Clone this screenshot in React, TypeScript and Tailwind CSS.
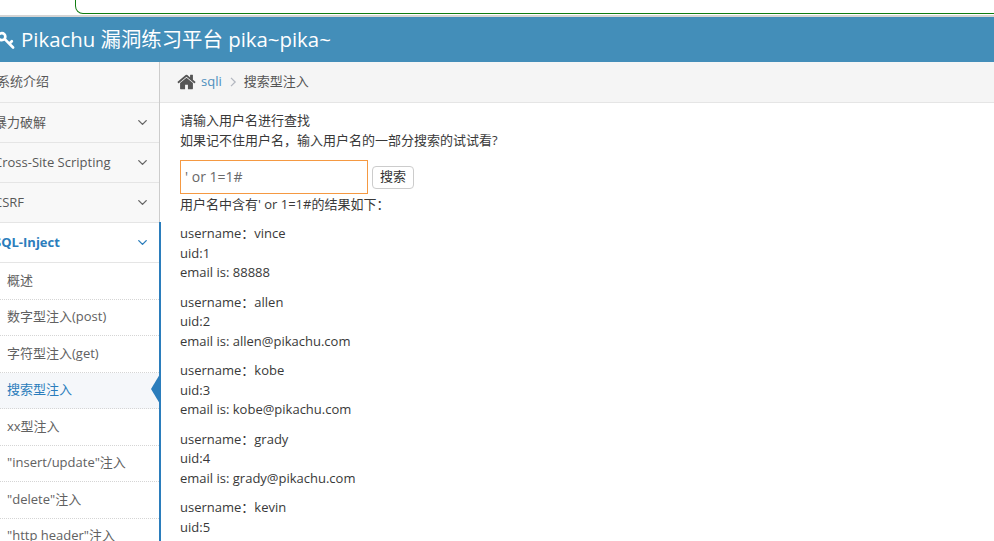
import { ChevronDown } from 'lucide-react';

const MENU = ['暴力破解', 'Cross-Site Scripting', 'CSRF'];
const SUB_MENU = ['数字型注入(post)', '字符型注入(get)'];
const SUB_MENU_AFTER = ['xx型注入', '"insert/update"注入', '"delete"注入', '"http header"注入'];

const RESULTS = [
  { name: 'vince', uid: 1, email: '88888' },
  { name: 'allen', uid: 2, email: 'allen@pikachu.com' },
  { name: 'kobe', uid: 3, email: 'kobe@pikachu.com' },
  { name: 'grady', uid: 4, email: 'grady@pikachu.com' },
  { name: 'kevin', uid: 5, email: 'kevin@pikachu.com' },
];

function SubItem({ label }: { label: string }) {
  return (
    <li className="h-[36.5px] pl-[7px] pb-[1px] flex items-center bg-white text-[#616161] border-b border-dotted border-[#d5d5d5] whitespace-nowrap">
      {label}
    </li>
  );
}

export default function App() {
  return (
    <div className="h-[541px] w-[994px] overflow-hidden bg-white text-[13px] leading-[19.5px] text-[#393939] font-['Open_Sans','Noto_Sans_CJK_SC',sans-serif]">
      {/* browser strip above the page */}
      <div className="h-[17px] border-b-2 border-[#d4d4d4] overflow-hidden">
        <div className="ml-[75px] mr-[-20px] h-[14px] rounded-b-lg border border-t-0 border-[#107c10]" />
      </div>

      <div className="h-[45px] bg-[#438eb9] flex items-center text-white text-[20.4px]">
        <svg viewBox="0 0 24 24" className="w-[20px] h-[20px] -ml-[4px] mr-[5px]" fill="none" stroke="white" strokeWidth="3.2" strokeLinecap="round">
          <circle cx="7" cy="8" r="4.200" />
          <path d="M10.500 11l10 10M16 16.500l3-3" />
        </svg>
        <span>Pikachu 漏洞练习平台 pika~pika~</span>
      </div>

      <div className="flex">
        <aside className="w-[160px] shrink-0 h-[479px] bg-[#f2f2f2] border-r border-[#cccccc] relative">
          <ul className="h-full overflow-hidden">
            <li className="h-[41px] flex items-center bg-[#f8f8f8] text-[#585858] border-b border-[#e5e5e5]">
              <span className="-ml-[3px]">系统介绍</span>
            </li>
            {MENU.map(m => (
              <li key={m} className="h-[40px] flex items-center justify-between pr-[9px] bg-[#f8f8f8] text-[#585858] border-b border-[#e5e5e5] whitespace-nowrap">
                <span className="-ml-[6px]">{m}</span>
                <ChevronDown size={15} strokeWidth={2.200} className="text-[#666666]" />
              </li>
            ))}
            <li className="h-[40px] flex items-center justify-between pr-[9px] bg-white text-[#2b7dbc] font-bold border-b border-[#e5e5e5] whitespace-nowrap">
              <span className="-ml-[6px]">SQL-Inject</span>
              <ChevronDown size={15} strokeWidth={2.200} className="text-[#2b7dbc]" />
            </li>
            <SubItem label="概述" />
            {SUB_MENU.map(m => <SubItem key={m} label={m} />)}
            <li className="h-[36.5px] pl-[7px] pb-[1px] flex items-center bg-[#f5f7fa] text-[#2b7dbc] border-b border-dotted border-[#d5d5d5]">
              搜索型注入
            </li>
            {SUB_MENU_AFTER.map(m => <SubItem key={m} label={m} />)}
          </ul>
          {/* blue rail and arrow on the open group */}
          <div className="absolute right-[-2px] top-[160px] bottom-0 w-[2px] bg-[#2b7dbc]" />
          <div className="absolute right-[-1px] top-[312px] w-0 h-0 border-y-[15px] border-y-transparent border-r-[9px] border-r-[#2b7dbc]" />
        </aside>

        <main className="flex-1 min-w-0">
          <div className="h-[41px] bg-[#f5f5f5] border-b border-[#e5e5e5] flex items-center pl-[17px] text-[#555555]">
            <svg viewBox="0 0 1664 1792" className="w-[19px] h-[20px] fill-[#555555]">
              <path d="M1408 992v480q0 26-19 45t-45 19h-384v-384h-256v384h-384q-26 0-45-19t-19-45v-480q0-1 .5-3t.5-3l575-474 575 474q1 2 1 6zm223-69l-62 74q-8 9-21 11h-3q-13 0-21-7l-692-577-692 577q-12 8-24 7-13-2-21-11l-62-74q-8-10-7-23.500t11-21.500l719-599q32-26 76-26t76 26l244 204v-195q0-14 9-23t23-9h192q14 0 23 9t9 23v408l219 182q10 8 11 21.500t-7 23.500z" />
            </svg>
            <span className="ml-[5px] text-[#4c8fbd]">sqli</span>
            <svg viewBox="0 0 8 12" className="w-[7px] h-[10px] ml-[8px] mr-[7px]" fill="none" stroke="#b2b6bf" strokeWidth="1.5">
              <path d="M1 1l5 5-5 5" />
            </svg>
            <span>搜索型注入</span>
          </div>

          <div className="pl-[20px] pt-[8px]">
            <p>请输入用户名进行查找</p>
            <p>如果记不住用户名，输入用户名的一部分搜索的试试看?</p>
            <div className="mt-[10px] flex items-center">
              <input
                readOnly
                value="' or 1=1#"
                className="w-[188px] h-[34px] border border-[#f59942] px-[4px] pb-[2px] text-[14px] text-[#696969] outline-none"
              />
              <button className="ml-[4px] h-[23px] px-[7px] rounded-[4px] border border-[#cccccc] bg-white text-[#333333]">搜索</button>
            </div>
            <p className="mt-[0.5px]">用户名中含有' or 1=1#的结果如下：</p>
            {RESULTS.map(r => (
              <div key={r.uid} className="mt-[10px]">
                <p>username：{r.name}</p>
                <p>uid:{r.uid}</p>
                <p>email is: {r.email}</p>
              </div>
            ))}
          </div>
        </main>
      </div>
    </div>
  );
}
